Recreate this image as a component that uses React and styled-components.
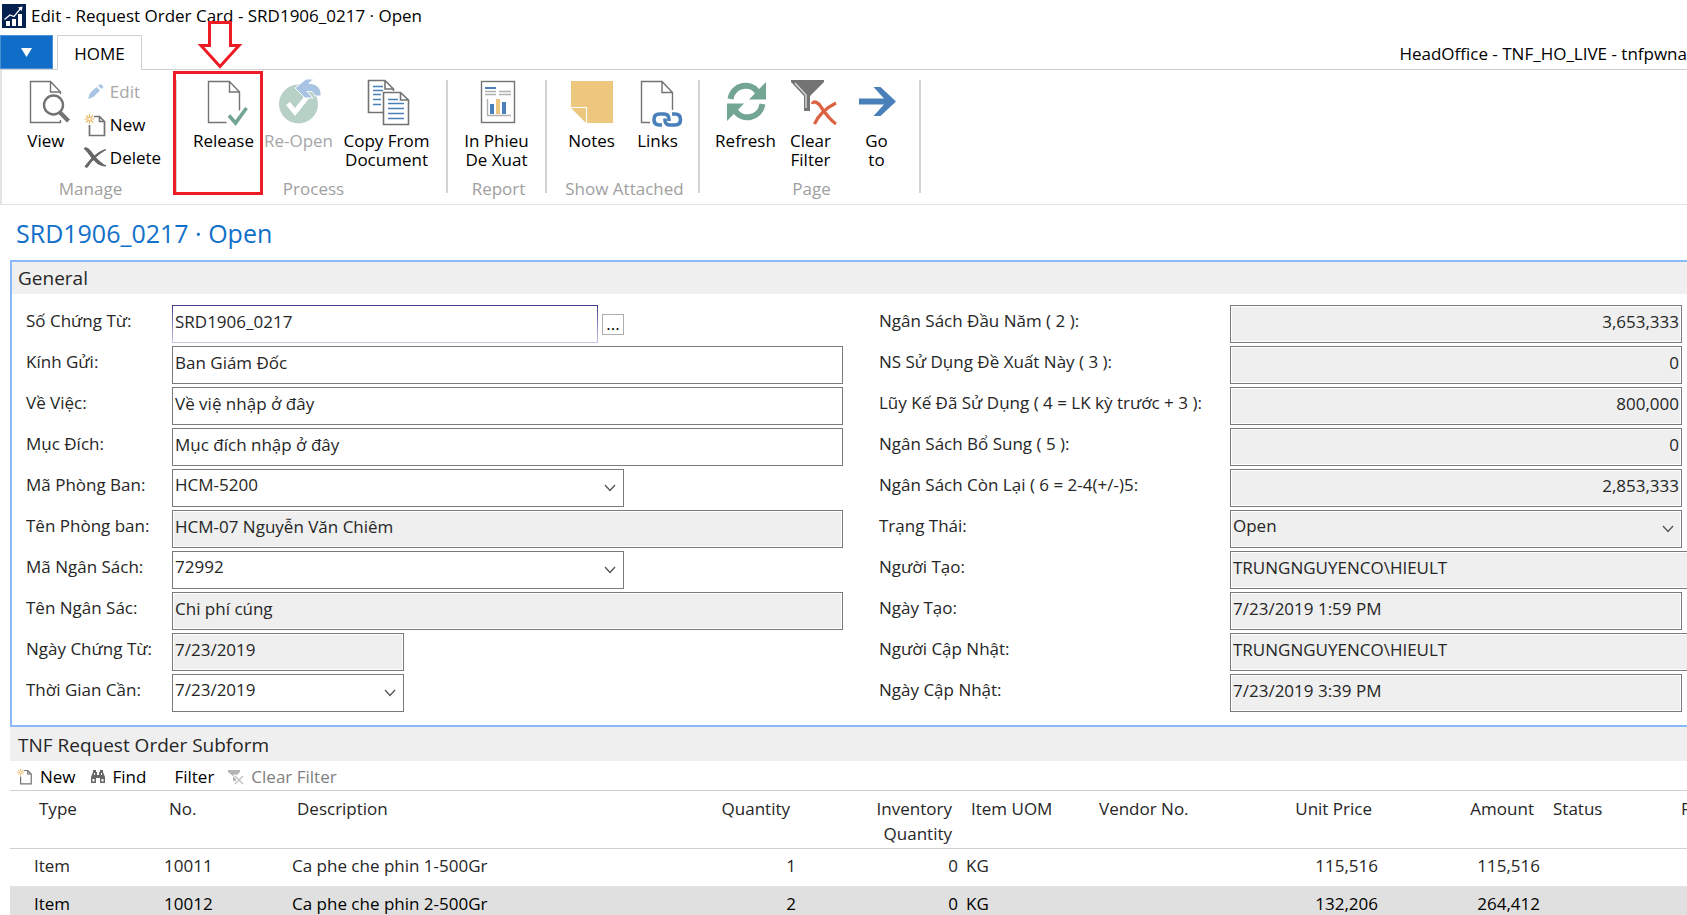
import styled, { createGlobalStyle } from "styled-components"

const GRAY = "#737373"
const BLUE = "#4a80b9"
const GREEN = "#73a593"

/* ---------- icons ---------- */

const AppIcon = () => (
  <svg width="24" height="24" viewBox="0 0 24 24">
    <rect width="24" height="24" fill="#04204f" />
    <path d="M4 17h4v5H4zM10 15h4v7h-4zM16 10h4v12h-4z" fill="#fff" />
    <path d="M2.5 15.5 8 11l4 1.5L19 4" fill="none" stroke="#fff" strokeWidth="1.2" />
    <path d="M16 3.5 20.5 2.5 19.8 7z" fill="#fff" />
  </svg>
)

const Big = ({ children }) => (
  <svg width="48" height="48" viewBox="0 0 48 48" fill="none" overflow="visible">{children}</svg>
)

const ViewIcon = () => (
  <Big>
    <path d="M38.5 15V13L28.5 2.5H8.5V43.5H38.5V41M28.5 2.5V13H38.5" stroke={GRAY} strokeWidth="1.4" />
    <circle cx="31.5" cy="26" r="9.5" stroke={GRAY} strokeWidth="2.4" fill="#fff" />
    <path d="M37.5 33 46.5 42" stroke={GRAY} strokeWidth="4.2" />
  </Big>
)

const ReleaseIcon = () => (
  <Big>
    <path d="M39.5 31.5V13L29.5 2.5H8.5V43.5H26.5M29.5 2.5V13H39.5" stroke={GRAY} strokeWidth="1.4" />
    <path d="M29 36.5 35.5 44 46.5 29" stroke={GREEN} strokeWidth="3.6" />
  </Big>
)

const ReopenIcon = () => (
  <Big>
    <circle cx="23.5" cy="25" r="19.5" fill="#b8d1c7" />
    <path d="M13 24.5 20 33 32 18" stroke="#fff" strokeWidth="5" />
    <path d="M20 9 31 0H38.500L34 4.500C41 4 47 9 46 17H40C39 13 36 12 32 12.500L38 19H30Z" fill="#a9c4e2" stroke="#fff" strokeWidth="1" />
  </Big>
)

const CopyIcon = () => (
  <Big>
    <path d="M20 33.5H5.5V1.5H22L30.5 10V12M22 1.5V10H30.5" stroke={GRAY} strokeWidth="1.6" />
    <path d="M10 7.5H20M10 11.5H20M10 15.5H18M10 20.5H18M10 25.5H18" stroke={BLUE} strokeWidth="1.4" />
    <path d="M20.5 13.5H37.5L45.5 21V45.5H20.5ZM37.5 13.5V21H45.5" fill="#fff" stroke={GRAY} strokeWidth="1.6" />
    <path d="M25 20.5H35M25 24.5H41M25 29.5H41M25 34.5H41M25 39.5H41" stroke={BLUE} strokeWidth="1.4" />
  </Big>
)

const ReportIcon = () => (
  <Big>
    <rect x="8.5" y="2.5" width="33" height="41" stroke={GRAY} strokeWidth="1.4" />
    <path d="M12 9H23" stroke={BLUE} strokeWidth="2" />
    <path d="M12 12.5H23M12 15.5H23M26 12.5H38M26 15.5H38" stroke="#b0b0b0" strokeWidth="1.4" />
    <path d="M14.5 20V36.5H38" stroke="#b0b0b0" strokeWidth="1.4" />
    <path d="M17 25h4v10h-4zM29 23h4v12h-4z" fill={BLUE} />
    <path d="M23 20h4v15h-4z" fill="#ecc67c" />
  </Big>
)

const NotesIcon = () => (
  <Big>
    <path d="M3 2H45V44H19V28H3Z" fill="#edc77d" />
    <path d="M3 29H18V44Z" fill="#edc77d" />
    <path d="M3 28.5H18.5V44" stroke="#fff" strokeWidth="1.2" />
  </Big>
)

const LinksIcon = () => (
  <Big>
    <path d="M38.5 31V13.5L28 2.5H7.500V43.5H16M28 2.5V13.5H38.5" stroke={GRAY} strokeWidth="1.4" />
    <path d="M35 42V40.500C35 37 33 35 30 35H25.500C22 35 20 37 20 40.500S22 46 25.500 46H28" stroke={BLUE} strokeWidth="3.600" />
    <path d="M31 39.500V41C31 44 33 46 36 46H41C44.500 46 46.500 44 46.500 40.500S44.500 35 41 35H38" stroke={BLUE} strokeWidth="3.600" />
  </Big>
)

const RefreshIcon = () => (
  <Big>
    <path d="M8.5 20C11 5 29 2.5 36 13.5" stroke={GREEN} strokeWidth="6" />
    <path d="M44 3V20.5H27Z" fill={GREEN} />
    <path d="M40.5 25C38 40 20 42.5 13 31.5" stroke={GREEN} strokeWidth="6" />
    <path d="M5 42V24.5H22Z" fill={GREEN} />
  </Big>
)

const ClearFilterIcon = () => (
  <Big>
    <path d="M4 1H37V3L23 17V32H17V17L4 3Z" fill={GRAY} />
    <path d="M8 4 19 16V29" stroke="#d8d8d8" strokeWidth="1.5" />
    <path d="M25.5 25C26 21 31 23 34 28 38 34 42 40 49 45" stroke="#db6341" strokeWidth="3.2" />
    <path d="M49 24C41 28 32 35 27.5 45" stroke="#db6341" strokeWidth="3.2" />
  </Big>
)

const GotoIcon = () => (
  <Big>
    <path d="M6 19.5H31L20.5 8H27.5L43 22.5 27.5 37H20.5L31 25.5H6Z" fill={BLUE} />
  </Big>
)

const PencilIcon = () => (
  <svg width="24" height="24" viewBox="0 0 24 24">
    <path d="M5 19 7 13 13.5 7 17 10.5 10.5 17Z" fill="#a9c4e2" />
    <path d="M15 5.5 18.5 9 20.5 7 18 4Z" fill="#a9c4e2" />
  </svg>
)

const NewIcon = ({ size = 24 }) => (
  <svg width={size} height={size} viewBox="0 0 24 24" fill="none">
    <path d="M11 3.5H16.5L21.5 8.5V22.5H6.5V12M16.5 3.5V8.5H21.5" stroke={GRAY} strokeWidth="1.7" />
    <path d="M6.5 1V11M1.5 6H11.5M3 2.5 10 9.5M10 2.5 3 9.5" stroke="#ebb765" strokeWidth="1.2" />
    <circle cx="6.5" cy="6" r="1.2" fill="#fff" />
  </svg>
)

const DeleteIcon = () => (
  <svg width="24" height="24" viewBox="0 0 24 24" fill="none">
    <path d="M1 2.5C3 1 5 2 8 5.5 12 11 16 16 23 20 17 20 13 17 9 12 6 8 4 5 1 2.5Z" fill="#666" stroke="#666" />
    <path d="M23 3.5C16 5 8 12 2 20.5L4 21.5C9 14 15 8 23 3.5Z" fill="#666" stroke="#666" />
  </svg>
)

const FindIcon = () => (
  <svg width="16" height="16" viewBox="0 0 16 16" fill="#666">
    <path d="M3 1h3v2h1v3h2V3h1V1h3v2l2 5v6h-5V9H6v5H1V8l2-5z" />
    <path d="M2.5 10h2v2.5h-2zM11.5 10h2v2.5h-2zM4 4h1v2H4zM11 4h1v2h-1z" fill="#fff" />
  </svg>
)

const SmallClearIcon = () => (
  <svg width="16" height="16" viewBox="0 0 16 16" fill="none">
    <path d="M0 1H12V3L8 7V12H5V7L0 3Z" fill="#b4b4b4" />
    <path d="M6 6 15 15M15 7 6 15" stroke="#fff" strokeWidth="3" />
    <path d="M7 7 15 15M15 7 7 15" stroke="#c4c4c4" strokeWidth="1.5" />
  </svg>
)

const Chevron = () => (
  <ChevronSvg width="12" height="8" viewBox="0 0 12 8" fill="none">
    <path d="M1 1 6 6.5 11 1" stroke="#555" strokeWidth="1.3" />
  </ChevronSvg>
)

/* ---------- data ---------- */

const leftFields = [
  { id: "docNo", label: "Số Chứng Từ:", value: "SRD1906_0217", size: "medium", focus: true, assist: true },
  { id: "to", label: "Kính Gửi:", value: "Ban Giám Đốc" },
  { id: "about", label: "Về Việc:", value: "Về việ nhập ở đây" },
  { id: "purpose", label: "Mục Đích:", value: "Mục đích nhập ở đây" },
  { id: "dept", label: "Mã Phòng Ban:", value: "HCM-5200", size: "medium", combo: true },
  { id: "deptName", label: "Tên Phòng ban:", value: "HCM-07 Nguyễn Văn Chiêm", locked: true },
  { id: "budget", label: "Mã Ngân Sách:", value: "72992", size: "medium", combo: true },
  { id: "budgetName", label: "Tên Ngân Sác:", value: "Chi phí cúng", locked: true },
  { id: "docDate", label: "Ngày Chứng Từ:", value: "7/23/2019", size: "small", locked: true },
  { id: "needDate", label: "Thời Gian Cần:", value: "7/23/2019", size: "small", combo: true },
]

const rightFields = [
  { id: "b2", label: "Ngân Sách Đầu Năm ( 2 ):", value: "3,653,333", locked: true, number: true },
  { id: "b3", label: "NS Sử Dụng Đề Xuất Này ( 3 ):", value: "0", locked: true, number: true },
  { id: "b4", label: "Lũy Kế Đã Sử Dụng ( 4 = LK kỳ trước + 3 ):", value: "800,000", locked: true, number: true },
  { id: "b5", label: "Ngân Sách Bổ Sung ( 5 ):", value: "0", locked: true, number: true },
  { id: "b6", label: "Ngân Sách Còn Lại ( 6 = 2-4(+/-)5:", value: "2,853,333", locked: true, number: true },
  { id: "state", label: "Trạng Thái:", value: "Open", locked: true, combo: true },
  { id: "createdBy", label: "Người Tạo:", value: "TRUNGNGUYENCO\\HIEULT", locked: true, size: "bleed" },
  { id: "createdAt", label: "Ngày Tạo:", value: "7/23/2019 1:59 PM", locked: true },
  { id: "updatedBy", label: "Người Cập Nhật:", value: "TRUNGNGUYENCO\\HIEULT", locked: true, size: "bleed" },
  { id: "updatedAt", label: "Ngày Cập Nhật:", value: "7/23/2019 3:39 PM", locked: true },
]

const columns = [
  { key: "type", title: "Type", width: 150, first: true },
  { key: "no", title: "No.", width: 128 },
  { key: "desc", title: "Description", width: 382 },
  { key: "qty", title: "Quantity", width: 130, right: true },
  { key: "inv", title: "Inventory Quantity", width: 162, right: true },
  { key: "uom", title: "Item UOM", width: 128 },
  { key: "vendor", title: "Vendor No.", width: 162 },
  { key: "price", title: "Unit Price", width: 130, right: true },
  { key: "amount", title: "Amount", width: 162, right: true },
  { key: "status", title: "Status", width: 128 },
  { key: "more", title: "F" },
]

const rows = [
  { type: "Item", no: "10011", desc: "Ca phe che phin 1-500Gr", qty: "1", inv: "0", uom: "KG", price: "115,516", amount: "115,516" },
  { type: "Item", no: "10012", desc: "Ca phe che phin 2-500Gr", qty: "2", inv: "0", uom: "KG", price: "132,206", amount: "264,412", selected: true },
]

/* ---------- parts ---------- */

const Field = ({ field, labelWidth }) => (
  <FieldRow $labelWidth={labelWidth}>
    <label htmlFor={field.id}>{field.label}</label>
    <Control $size={field.size}>
      {field.combo ? (
        <>
          <Select id={field.id} $locked={field.locked} defaultValue={field.value}>
            <option>{field.value}</option>
          </Select>
          <Chevron />
        </>
      ) : (
        <Input
          id={field.id}
          defaultValue={field.value}
          readOnly={field.locked}
          $locked={field.locked}
          $number={field.number}
          $focus={field.focus}
        />
      )}
      {field.assist && <AssistButton aria-label="Assist">...</AssistButton>}
    </Control>
  </FieldRow>
)

const Ribbon = () => (
  <RibbonBar>
    <Group $width={173}>
      <Buttons>
        <BigButton $width={60}><ViewIcon />View</BigButton>
        <SmallButtons>
          <SmallButton disabled><PencilIcon />Edit</SmallButton>
          <SmallButton><NewIcon />New</SmallButton>
          <SmallButton><DeleteIcon />Delete</SmallButton>
        </SmallButtons>
      </Buttons>
      <GroupLabel>Manage</GroupLabel>
    </Group>
    <Separator />
    <Group $width={269}>
      <Buttons>
        <Highlight>
          <BigButton $width={70}><ReleaseIcon />Release</BigButton>
          <Arrow width="46" height="50" viewBox="0 0 46 50">
            <path d="M12.5 1.5H33.5V24.5H42L23 45.5 4 24.5H12.5Z" fill="none" stroke="#ee1c24" strokeWidth="3" />
          </Arrow>
          <Frame />
        </Highlight>
        <BigButton $width={80} disabled><ReopenIcon />Re-Open</BigButton>
        <BigButton $width={96}><CopyIcon />Copy From<br />Document</BigButton>
      </Buttons>
      <GroupLabel>Process</GroupLabel>
    </Group>
    <Separator />
    <Group $width={97}>
      <Buttons>
        <BigButton $width={80}><ReportIcon />In Phieu<br />De Xuat</BigButton>
      </Buttons>
      <GroupLabel>Report</GroupLabel>
    </Group>
    <Separator />
    <Group $width={151}>
      <Buttons $indent>
        <BigButton $width={66}><NotesIcon />Notes</BigButton>
        <BigButton $width={66}><LinksIcon />Links</BigButton>
      </Buttons>
      <GroupLabel>Show Attached</GroupLabel>
    </Group>
    <Separator />
    <Group $width={219}>
      <Buttons $indent>
        <BigButton $width={70}><RefreshIcon />Refresh</BigButton>
        <BigButton $width={60}><ClearFilterIcon />Clear<br />Filter</BigButton>
        <BigButton $width={72}><GotoIcon />Go<br />to</BigButton>
      </Buttons>
      <GroupLabel>Page</GroupLabel>
    </Group>
    <Separator />
  </RibbonBar>
)

const Lines = () => (
  <Table>
    <colgroup>
      {columns.map((c) => <Col key={c.key} $width={c.width} />)}
    </colgroup>
    <thead>
      <tr>
        {columns.map((c) => (
          <Th key={c.key} $right={c.right} $first={c.first}>{c.title}</Th>
        ))}
      </tr>
    </thead>
    <tbody>
      {rows.map((r) => (
        <Row key={r.no} $selected={r.selected}>
          {columns.map((c) => (
            <Td key={c.key} $right={c.right} $first={c.first}>{r[c.key]}</Td>
          ))}
        </Row>
      ))}
    </tbody>
  </Table>
)

const App = () => {
  return (
    <Window>
      <GlobalStyle />
      <TitleBar>
        <AppIcon />
        <span>Edit - Request Order Card - SRD1906_0217 · Open</span>
      </TitleBar>
      <TabBar>
        <FileButton aria-label="File menu">
          <svg width="11" height="9" viewBox="0 0 11 9"><path d="M0 0H11L5.5 9Z" fill="#fff" /></svg>
        </FileButton>
        <Tab>HOME</Tab>
        <Company>HeadOffice - TNF_HO_LIVE - tnfpwna</Company>
      </TabBar>
      <Ribbon />
      <PageTitle>SRD1906_0217 · Open</PageTitle>
      <General>
        <SectionTitle>General</SectionTitle>
        <Form>
          <div>{leftFields.map((f) => <Field key={f.id} field={f} labelWidth={146} />)}</div>
          <div>{rightFields.map((f) => <Field key={f.id} field={f} labelWidth={351} />)}</div>
        </Form>
      </General>
      <Subform>
        <SubformTitle>TNF Request Order Subform</SubformTitle>
        <Toolbar>
          <ToolButton><NewIcon size={17} />New</ToolButton>
          <ToolButton><FindIcon />Find</ToolButton>
          <ToolButton $indent>Filter</ToolButton>
          <ToolButton disabled><SmallClearIcon />Clear Filter</ToolButton>
        </Toolbar>
        <Lines />
      </Subform>
    </Window>
  )
}
export default App;

/* ---------- styles ---------- */

const GlobalStyle = createGlobalStyle`
* {
    box-sizing: border-box;
}

body {
    margin: 0;
    background: #fff;
    color: #262626;
    font-family: "Open Sans", "Noto Sans", sans-serif;
    font-size: 17px;
    line-height: 24px;
}

button, input, select {
    font: inherit;
    color: inherit;
    margin: 0;
    border-radius: 0;
}

button {
    padding: 0;
    border: none;
    background: none;
}
`

const Window = styled.div`
display: flex;
flex-direction: column;
height: 100vh;
overflow: hidden;

> * {
    flex-shrink: 0;
}
`

const TitleBar = styled.div`
display: flex;
align-items: center;
gap: 5px;
height: 35px;
padding: 0 2px 3px;
color: #000;
`

const TabBar = styled.div`
display: flex;
height: 35px;
border-bottom: 1px solid #d0d0d0;
color: #000;
`

const FileButton = styled.button`
display: flex;
align-items: center;
justify-content: center;
width: 53px;
height: 34px;
margin-right: 4px;
background: #106ec8;
border: 1px solid #4a92d8;
`

const Tab = styled.button`
width: 85px;
height: 35px;
padding-top: 1px;
background: #fff;
border: 1px solid #d0d0d0;
border-bottom: none;
`

const Company = styled.div`
margin-left: auto;
padding-top: 7px;
white-space: nowrap;
`

const RibbonBar = styled.div`
display: flex;
padding: 5px 0;
border-left: 2px solid #e4e4e4;
border-bottom: 1px solid #e4e4e4;
color: #000;
`

const Group = styled.div`
width: ${(p) => p.$width}px;
`

const Buttons = styled.div`
display: flex;
justify-content: center;
height: 104px;
padding-left: ${(p) => (p.$indent ? 4 : 0)}px;
`

const GroupLabel = styled.div`
padding-left: 4px;
text-align: center;
line-height: 20px;
color: #a0a0a0;
`

const Separator = styled.div`
width: 2px;
height: 113px;
margin-top: 5px;
background: #d4d4d4;
`

const BigButton = styled.button`
display: flex;
flex-direction: column;
align-items: center;
justify-content: flex-start;
width: ${(p) => p.$width}px;
padding-top: 4px;
line-height: 19px;
white-space: nowrap;
text-align: center;

svg {
    flex-shrink: 0;
    margin-bottom: 4px;
}

&:disabled {
    color: #a6a6a6;
}
`

const SmallButtons = styled.div`
display: flex;
flex-direction: column;
margin-left: 7px;
`

const SmallButton = styled.button`
display: flex;
align-items: center;
gap: 3px;
height: 33px;

&:disabled {
    color: #a6a6a6;
}
`

const Highlight = styled.div`
display: flex;
position: relative;
z-index: 1;
`

const Frame = styled.div`
position: absolute;
top: -4px;
left: -16px;
width: 90px;
height: 124px;
border: 3px solid #ee1c24;
pointer-events: none;
`

const Arrow = styled.svg`
position: absolute;
top: -54px;
left: 8px;
`

const PageTitle = styled.h1`
margin: 0;
padding: 12px 16px 11px;
font-size: 25px;
font-weight: normal;
line-height: 32px;
color: #1170c8;
`

const General = styled.section`
margin-left: 10px;
border: 2px solid #8ab8f8;
border-right: none;
`

const SectionTitle = styled.h2`
margin: 0;
padding: 0 6px;
height: 32px;
font-size: 19px;
font-weight: normal;
line-height: 32px;
background: #efefef;
`

const SubformTitle = styled(SectionTitle)`
padding: 2px 8px 0;
height: 34px;
`

const Form = styled.div`
display: grid;
grid-template-columns: minmax(0, 817fr) minmax(0, 803fr);
gap: 36px;
padding: 11px 5px 10px 14px;
`

const FieldRow = styled.div`
display: grid;
grid-template-columns: ${(p) => p.$labelWidth}px minmax(0, 1fr);
height: 41px;

label {
    padding-top: 4px;
    white-space: nowrap;
}
`

const widths = {
  medium: "width: 452px;",
  small: "width: 232px;",
  bleed: "margin-right: -8px;",
}

const Control = styled.div`
position: relative;
display: flex;
align-items: center;
gap: 4px;
height: 38px;
max-width: ${(p) => (p.$size === "bleed" ? "none" : "100%")};
${(p) => widths[p.$size]}
`

const Input = styled.input`
flex: 1;
min-width: 0;
height: 38px;
padding: 0 2px 6px;
outline: none;
border: 1px solid #7a7a7a;
background: ${(p) => (p.$locked ? "#efefef" : "#fff")};
box-shadow: inset 0 0 0 1px #fff;
text-align: ${(p) => (p.$number ? "right" : "left")};
${(p) => p.$focus && "border-image: linear-gradient(#3f3a8c, #c9c9e6) 1;"}
`

const Select = styled.select`
flex: 1;
min-width: 0;
height: 38px;
padding: 0 2px 6px;
appearance: none;
outline: none;
border: 1px solid #7a7a7a;
background: ${(p) => (p.$locked ? "#efefef" : "#fff")};
box-shadow: inset 0 0 0 1px #fff;
`

const ChevronSvg = styled.svg`
position: absolute;
right: 8px;
top: 15px;
pointer-events: none;
`

const AssistButton = styled.button`
width: 22px;
height: 21px;
border: 1px solid #adadad;
line-height: 16px;
color: #000;
`

const Subform = styled.section`
margin-left: 10px;
overflow: hidden;
`

const Toolbar = styled.div`
display: flex;
align-items: center;
gap: 14px;
height: 30px;
padding: 2px 6px 0;
border-bottom: 1px solid #d0d0d0;
color: #000;
`

const ToolButton = styled.button`
display: flex;
align-items: center;
gap: 7px;
white-space: nowrap;
margin-left: ${(p) => (p.$indent ? 14 : 0)}px;

&:disabled {
    color: #808080;
}
`

const Table = styled.table`
width: 100%;
table-layout: fixed;
border-collapse: collapse;
`

const Col = styled.col`
width: ${(p) => (p.$width ? p.$width + "px" : "auto")};
`

const Th = styled.th`
height: 57px;
padding: 5px 10px 0 ${(p) => (p.$first ? 29 : 9)}px;
font-weight: normal;
line-height: 25px;
vertical-align: top;
text-align: ${(p) => (p.$right ? "right" : "left")};
border-bottom: 1px solid #d0d0d0;
`

const Td = styled.td`
height: 38px;
padding: 0 4px 2px ${(p) => (p.$first ? 24 : 4)}px;
text-align: ${(p) => (p.$right ? "right" : "left")};
white-space: nowrap;
border-bottom: 1px solid #e4e4e4;
`

const Row = styled.tr`
background: ${(p) => (p.$selected ? "#e0e0e0" : "#fff")};
color: ${(p) => (p.$selected ? "#000" : "inherit")};
`
